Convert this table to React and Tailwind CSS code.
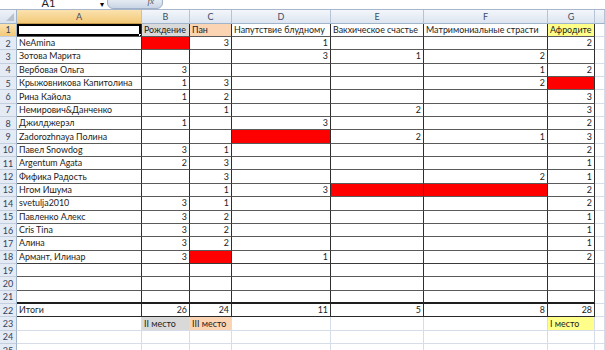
import React from 'react';

const GRID = 'grid grid-cols-[17px_125px_48px_42px_99px_93px_124px_47px_1fr]';

const rows = [
  ['', 'Рождение', 'Пан', 'Напутствие блудному', 'Вакхическое счастье', 'Матримониальные страсти', 'Афродите'],
  ['NeAmina', 'R', 3, 1, '', '', 2],
  ['Зотова Марита', '', '', 3, 1, 2, ''],
  ['Вербовая Ольга', 3, '', '', '', 1, 2],
  ['Крыжовникова Капитолина', 1, 3, '', '', 2, 'R'],
  ['Рина Кайола', 1, 2, '', '', '', 3],
  ['Немирович&Данченко', '', 1, '', 2, '', 3],
  ['Джилджерэл', 1, '', 3, '', '', 2],
  ['Zadorozhnaya Полина', '', '', 'R', 2, 1, 3],
  ['Павел Snowdog', 3, 1, '', '', '', 2],
  ['Argentum Agata', 2, 3, '', '', '', 1],
  ['Фифика Радость', '', 3, '', '', 2, 1],
  ['Нгом Ишума', '', 1, 3, 'R', 'R', 2],
  ['svetulja2010', 3, 1, '', '', '', 2],
  ['Павленко Алекс', 3, 2, '', '', '', 1],
  ['Cris Tina', 3, 2, '', '', '', 1],
  ['Алина', 3, 2, '', '', '', 1],
  ['Армант, Илинар', 3, 'R', 1, '', '', 2],
  ['', '', '', '', '', '', ''],
  ['', '', '', '', '', '', ''],
  ['', '', '', '', '', '', ''],
  ['Итоги', 26, 24, 11, 5, 8, 28],
  ['', 'II место', 'III место', '', '', '', 'I место'],
  ['', '', '', '', '', '', ''],
  ['', '', '', '', '', '', ''],
];

const fills = {
  '1-1': 'bg-[#d9d9d9]',
  '1-2': 'bg-[#fbd4b4]',
  '1-6': 'bg-[#ffff8a]',
  '23-1': 'bg-[#d9d9d9]',
  '23-2': 'bg-[#fbd4b4]',
  '23-6': 'bg-[#ffff8a]',
};

const LETTERS = ['A', 'B', 'C', 'D', 'E', 'F', 'G', ''];

function Cell({ r, c, v }) {
  const inTable = r <= 22 && c <= 6;
  let cls = 'relative flex items-center overflow-hidden whitespace-nowrap leading-none ';
  if (inTable) {
    cls += 'border-r border-r-[#2e2e2e] ';
    if (r === 21) cls += 'border-b-2 border-b-[#1e1e1e] ';
    else if (r === 22) cls += 'border-b border-b-[#2a2a2a] ';
    else if (r === 18) cls += 'border-b border-b-[#3a3a3a] ';
    else cls += 'border-b border-b-[#5a5a5a] ';
  } else {
    cls += 'border-r border-r-[#d6dde8] border-b border-b-[#d6dde8] ';
  }
  if (v === 'R') cls += 'bg-[#ff0000] ';
  else if (fills[`${r}-${c}`]) cls += fills[`${r}-${c}`] + ' ';
  else cls += 'bg-white ';
  const isNum = typeof v === 'number';
  cls += isNum ? 'justify-end pr-[2px] ' : 'justify-start pl-[2px] ';
  const text = v === 'R' ? '' : v;
  return (
    <div className={cls}>
      <span className="pt-[1px]">{text}</span>
      {r === 1 && c === 0 && (
        <>
          <div className="absolute inset-0 border-2 border-black pointer-events-none" />
          <div className="absolute right-[-2px] bottom-[-2px] w-[4px] h-[4px] bg-black border border-white" />
        </>
      )}
    </div>
  );
}

export default function App() {
  return (
    <div
      className="w-[605px] h-[350px] overflow-hidden bg-white text-[#1c1c1c] text-[8.9px]"
      style={{ fontFamily: 'Lato, "Noto Sans", sans-serif' }}
    >
      {/* formula bar remnant */}
      <div className="h-[10px] flex overflow-hidden bg-white border-b border-b-[#a7b6ca]">
        <div className="w-[97px] flex justify-center items-end bg-white">
          <span className="text-[11px] leading-none mb-[1px] text-[#222]">A1</span>
        </div>
        <div className="w-[10px] flex items-end justify-center">
          <span className="text-[8px] leading-none mb-[1px] text-black">▾</span>
        </div>
        <div className="w-[56px] h-[14px] mt-[-5px] rounded-[6px] border border-[#9fb0c8] bg-gradient-to-b from-[#f3f6fa] to-[#c9d5e5] flex items-end justify-end pr-[8px]">
          <span className="text-[9px] italic leading-none mb-[2px] text-[#555]" style={{ fontFamily: '"Liberation Serif", serif' }}>fx</span>
        </div>
        <div className="flex-1 bg-white" />
      </div>

      {/* column headers */}
      <div className={`${GRID} h-[13.5px] text-[#3d4c64] text-[9px]`}>
        <div className="relative bg-gradient-to-b from-[#eef2f8] to-[#dae2ee] border-r border-r-[#9fb3cb] border-b border-b-[#9fb3cb]">
          <div className="absolute right-[2px] bottom-[2px] w-0 h-0 border-l-[8px] border-l-transparent border-b-[8px] border-b-[#b8c2cf]" />
        </div>
        {LETTERS.map((l, i) => (
          <div
            key={i}
            className={`flex items-center justify-center leading-none border-r border-r-[#b4c3d6] border-b border-b-[#9fb3cb] ${
              i === 0
                ? 'bg-gradient-to-b from-[#fbe2ae] to-[#f3c978] border-b-[#c89c4a]'
                : 'bg-gradient-to-b from-[#f3f6fb] to-[#dde5f0]'
            }`}
          >
            {l}
          </div>
        ))}
      </div>

      {/* rows */}
      {rows.map((row, ri) => {
        const r = ri + 1;
        return (
          <div key={r} className={`${GRID} h-[13.36px]`}>
            <div
              className={`flex items-center justify-center leading-none text-[9px] text-[#33425a] border-r border-r-[#9fb3cb] border-b border-b-[#c3cfde] ${
                r === 1
                  ? 'bg-gradient-to-b from-[#fbe2ae] to-[#f3c978]'
                  : 'bg-[#e5ebf4]'
              }`}
            >
              {r}
            </div>
            {row.map((v, c) => (
              <Cell key={c} r={r} c={c} v={v} />
            ))}
            <div className="border-r border-r-[#d6dde8] border-b border-b-[#d6dde8] bg-white" />
          </div>
        );
      })}
    </div>
  );
}
